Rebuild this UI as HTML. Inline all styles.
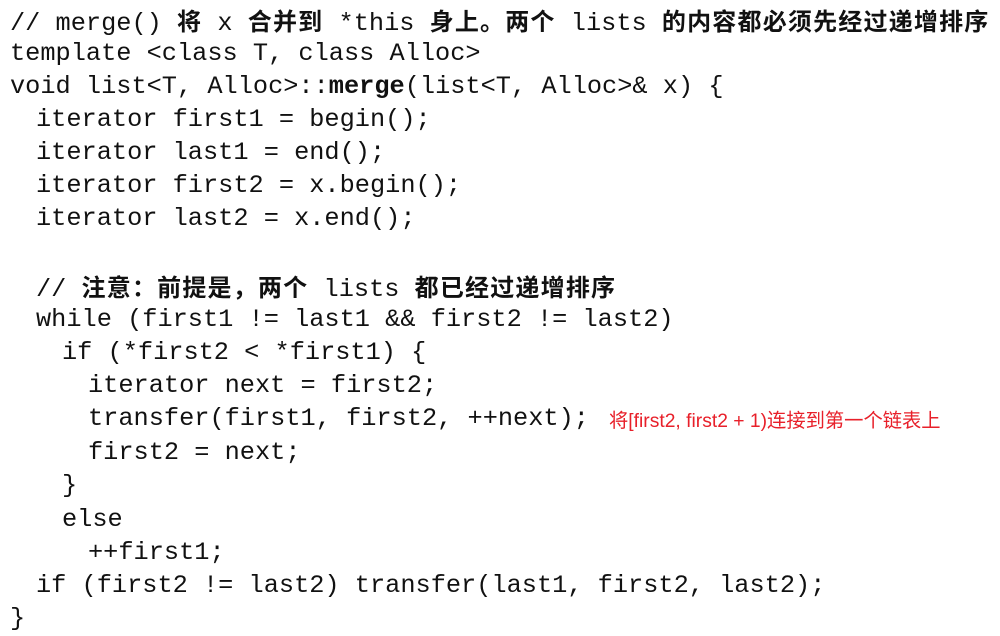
<!DOCTYPE html>
<html><head><meta charset="utf-8"><style>
body{margin:0;background:#fff;width:1000px;height:636px;overflow:hidden;position:relative}
.l{position:absolute;left:10px;white-space:pre;font-family:"Liberation Mono","Noto Sans CJK SC",monospace;font-size:25.3px;line-height:33px;color:#111;letter-spacing:0}
.c{font-family:"Noto Sans CJK SC","WenQuanYi Zen Hei",sans-serif;font-weight:700;font-size:24px;letter-spacing:1.2px}
.r{position:absolute;left:609px;top:405px;font-family:"Liberation Sans","Noto Sans CJK SC",sans-serif;font-size:19.3px;color:#e8202a;white-space:pre}
</style></head><body>
<div class="l" style="top:3px">// merge() <span class="c">将</span> x <span class="c">合并到</span> *this <span class="c">身上。两个</span> lists <span class="c">的内容都必须先经过递增排序</span></div>
<div class="l" style="top:37px">template &lt;class T, class Alloc&gt;</div>
<div class="l" style="top:70px">void list&lt;T, Alloc&gt;::<b>merge</b>(list&lt;T, Alloc&gt;&amp; x) {</div>
<div class="l" style="top:103px;left:36px">iterator first1 = begin();</div>
<div class="l" style="top:136px;left:36px">iterator last1 = end();</div>
<div class="l" style="top:169px;left:36px">iterator first2 = x.begin();</div>
<div class="l" style="top:202px;left:36px">iterator last2 = x.end();</div>
<div class="l" style="top:269px;left:36px">// <span class="c">注意：前提是，两个</span> lists <span class="c">都已经过递增排序</span></div>
<div class="l" style="top:303px;left:36px">while (first1 != last1 &amp;&amp; first2 != last2)</div>
<div class="l" style="top:336px;left:62px">if (*first2 &lt; *first1) {</div>
<div class="l" style="top:369px;left:88px">iterator next = first2;</div>
<div class="l" style="top:402px;left:88px">transfer(first1, first2, ++next);</div>
<div class="r">将[first2, first2 + 1)连接到第一个链表上</div>
<div class="l" style="top:436px;left:88px">first2 = next;</div>
<div class="l" style="top:469px;left:62px">}</div>
<div class="l" style="top:503px;left:62px">else</div>
<div class="l" style="top:536px;left:88px">++first1;</div>
<div class="l" style="top:569px;left:36px">if (first2 != last2) transfer(last1, first2, last2);</div>
<div class="l" style="top:602px">}</div>
</body></html>
